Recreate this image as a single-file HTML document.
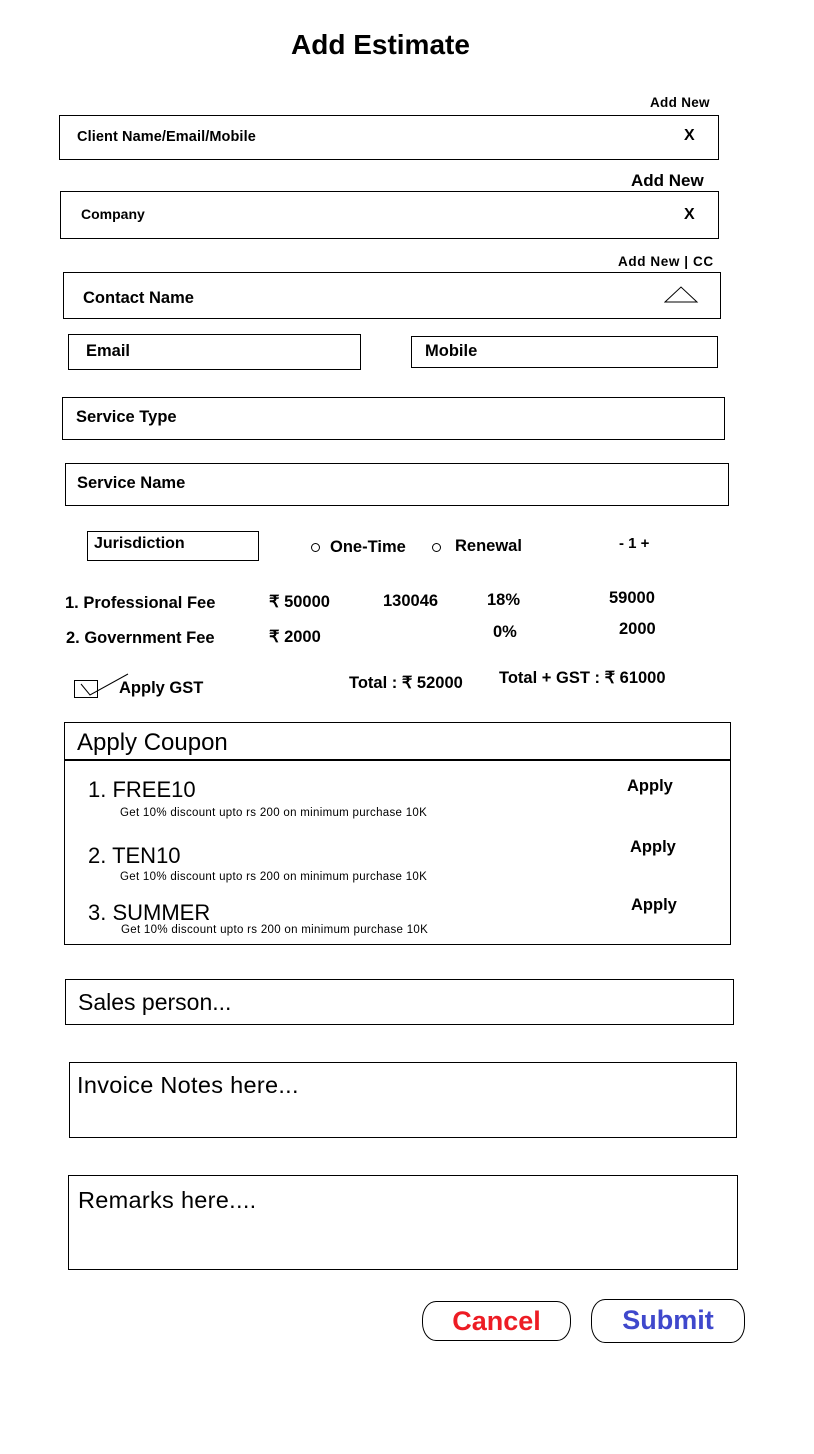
<!DOCTYPE html>
<html><head><meta charset="utf-8"><style>
body{margin:0;width:814px;height:1454px;background:#fff;position:relative;font-family:"Liberation Sans",sans-serif;color:#000;overflow:hidden}
.a{position:absolute;white-space:nowrap;line-height:1}
.b{font-weight:bold}
.box{position:absolute;border:1px solid #000;box-sizing:border-box}
.btn{position:absolute;border:1px solid #000;border-radius:14px/18px;box-sizing:border-box;text-align:center;font-weight:bold;font-size:27px;line-height:38px}
.sm{font-size:11.5px;letter-spacing:0.3px}
</style></head><body>
<div class="a b" style="left:291px;top:31px;font-size:28px">Add Estimate</div>

<div class="a b" style="left:650px;top:96px;font-size:13.5px;letter-spacing:0.3px">Add New</div>
<div class="box" style="left:59px;top:115px;width:660px;height:45px"></div>
<div class="a b" style="left:77px;top:130px;font-size:14.5px;letter-spacing:0.1px">Client Name/Email/Mobile</div>
<div class="a b" style="left:684px;top:128px;font-size:16px">X</div>

<div class="a b" style="left:631px;top:172px;font-size:17px">Add New</div>
<div class="box" style="left:60px;top:191px;width:659px;height:48px"></div>
<div class="a b" style="left:81px;top:207px;font-size:14px">Company</div>
<div class="a b" style="left:684px;top:207px;font-size:16px">X</div>

<div class="a b" style="left:618px;top:255px;font-size:13.5px;letter-spacing:0.6px">Add New | CC</div>
<div class="box" style="left:63px;top:272px;width:658px;height:47px"></div>
<div class="a b" style="left:83px;top:290px;font-size:16.5px">Contact Name</div>
<svg style="position:absolute;left:664px;top:286px" width="36" height="18"><polygon points="1,16 17,1 33,16" fill="none" stroke="#000" stroke-width="1"/></svg>

<div class="box" style="left:68px;top:334px;width:293px;height:36px"></div>
<div class="a b" style="left:86px;top:343px;font-size:16.5px">Email</div>
<div class="box" style="left:411px;top:336px;width:307px;height:32px"></div>
<div class="a b" style="left:425px;top:343px;font-size:16.5px">Mobile</div>

<div class="box" style="left:62px;top:397px;width:663px;height:43px"></div>
<div class="a b" style="left:76px;top:409px;font-size:16.5px">Service Type</div>
<div class="box" style="left:65px;top:463px;width:664px;height:43px"></div>
<div class="a b" style="left:77px;top:475px;font-size:16.5px">Service Name</div>

<div class="box" style="left:87px;top:531px;width:172px;height:30px"></div>
<div class="a b" style="left:94px;top:536px;font-size:16px">Jurisdiction</div>
<div class="box" style="left:311px;top:543px;width:9px;height:9px;border-radius:50%"></div>
<div class="a b" style="left:330px;top:539px;font-size:16.5px">One-Time</div>
<div class="box" style="left:432px;top:543px;width:9px;height:9px;border-radius:50%"></div>
<div class="a b" style="left:455px;top:538px;font-size:16.5px">Renewal</div>
<div class="a b" style="left:619px;top:536px;font-size:15px">- 1 +</div>

<div class="a b" style="left:65px;top:595px;font-size:16.5px">1. Professional Fee</div>
<div class="a b" style="left:269px;top:594px;font-size:16.5px">₹ 50000</div>
<div class="a b" style="left:383px;top:593px;font-size:16.5px">130046</div>
<div class="a b" style="left:487px;top:592px;font-size:16.5px">18%</div>
<div class="a b" style="left:609px;top:590px;font-size:16.5px">59000</div>
<div class="a b" style="left:66px;top:630px;font-size:16.5px">2. Government Fee</div>
<div class="a b" style="left:269px;top:629px;font-size:16.5px">₹ 2000</div>
<div class="a b" style="left:493px;top:624px;font-size:16.5px">0%</div>
<div class="a b" style="left:619px;top:621px;font-size:16.5px">2000</div>

<div class="box" style="left:74px;top:680px;width:24px;height:18px"></div>
<svg style="position:absolute;left:70px;top:670px" width="60" height="30"><polyline points="11,14 20,25 58,4" fill="none" stroke="#000" stroke-width="1"/></svg>
<div class="a b" style="left:119px;top:680px;font-size:16.5px">Apply GST</div>
<div class="a b" style="left:349px;top:675px;font-size:16.5px">Total : ₹ 52000</div>
<div class="a b" style="left:499px;top:670px;font-size:16.5px">Total + GST : ₹ 61000</div>

<div class="box" style="left:64px;top:722px;width:667px;height:223px"></div>
<div style="position:absolute;left:64px;top:759px;width:667px;height:2px;background:#000"></div>
<div class="a" style="left:77px;top:731px;font-size:24px">Apply Coupon</div>
<div class="a" style="left:88px;top:779px;font-size:22px">1. FREE10</div>
<div class="a sm" style="left:120px;top:808px">Get 10% discount upto rs 200 on minimum purchase 10K</div>
<div class="a b" style="left:627px;top:778px;font-size:16.5px">Apply</div>
<div class="a" style="left:88px;top:845px;font-size:22px">2. TEN10</div>
<div class="a sm" style="left:120px;top:872px">Get 10% discount upto rs 200 on minimum purchase 10K</div>
<div class="a b" style="left:630px;top:839px;font-size:16.5px">Apply</div>
<div class="a" style="left:88px;top:902px;font-size:22px">3. SUMMER</div>
<div class="a sm" style="left:121px;top:925px">Get 10% discount upto rs 200 on minimum purchase 10K</div>
<div class="a b" style="left:631px;top:897px;font-size:16.5px">Apply</div>

<div class="box" style="left:65px;top:979px;width:669px;height:46px"></div>
<div class="a" style="left:78px;top:991px;font-size:23px">Sales person...</div>
<div class="box" style="left:69px;top:1062px;width:668px;height:76px"></div>
<div class="a" style="left:77px;top:1074px;font-size:23.5px;letter-spacing:0.3px">Invoice Notes here...</div>
<div class="box" style="left:68px;top:1175px;width:670px;height:95px"></div>
<div class="a" style="left:78px;top:1189px;font-size:23.5px;letter-spacing:0.3px">Remarks here....</div>

<div class="btn" style="left:422px;top:1301px;width:149px;height:40px;color:#ed1c24">Cancel</div>
<div class="btn" style="left:591px;top:1299px;width:154px;height:44px;color:#3f48cc;line-height:40px">Submit</div>
</body></html>
